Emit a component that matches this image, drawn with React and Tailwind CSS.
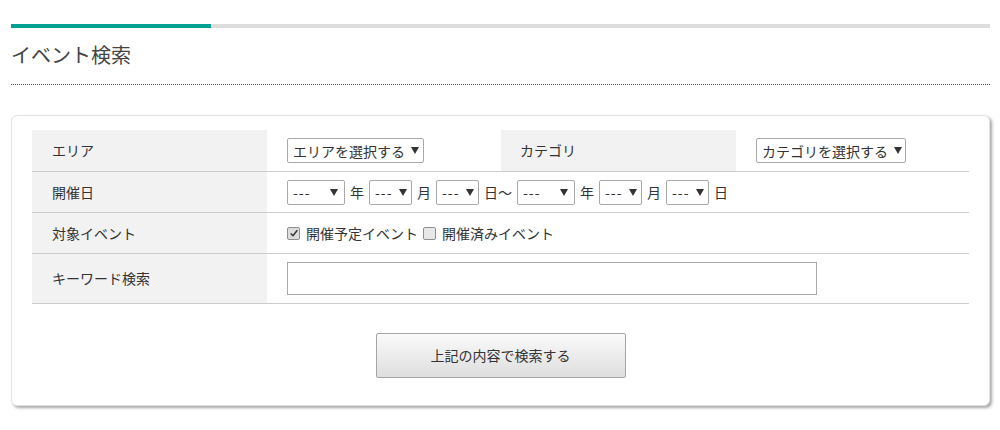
import React from 'react';

const FONT = '[font-family:Meiryo,"Noto_Sans_CJK_JP","Noto_Sans",sans-serif]';

const Caret = () => (
  <svg viewBox="0 0 8 7" className="ml-[6px] h-[7px] w-[8px] shrink-0">
    <path d="M0 0 H8 L4 7 Z" fill="#333" />
  </svg>
);

const FakeSelect = ({ label, width }) => (
  <div
    className={`flex h-[25px] shrink-0 items-center justify-between whitespace-nowrap rounded-[2px] border border-[#a9a9a9] bg-white pl-[5px] pr-[6px] text-[14px] text-[#333] ${width}`}
  >
    <span className={`leading-none ${label === '---' ? 'tracking-[1px]' : ''}`}>{label}</span>
    <Caret />
  </div>
);

const Checkbox = ({ checked, label }) => (
  <label className="flex items-center gap-[6px]">
    <span
      className={`flex h-[13px] w-[13px] items-center justify-center rounded-[2px] border border-[#8f8f8f] ${checked ? 'bg-[#dcdcdc]' : 'bg-[#e8e8e8]'}`}
    >
      {checked && (
        <svg viewBox="0 0 12 12" className="h-[10px] w-[10px]">
          <path d="M2 6.5 L4.8 9.2 L10 2.8" fill="none" stroke="#333" strokeWidth="1.8" />
        </svg>
      )}
    </span>
    <span>{label}</span>
  </label>
);

const Row = ({ label, children, tall = false }) => (
  <div className={`flex border-t border-[#cccccc] ${tall ? 'h-[50px]' : 'h-[41px]'}`}>
    <div className="flex w-[235px] items-center bg-[#f2f2f2] pl-[20px] text-[14px] text-[#333]">{label}</div>
    <div className="flex flex-1 items-center pl-[20px] text-[14px] text-[#333]">{children}</div>
  </div>
);

const DateSep = ({ children }) => <span className="mx-[5px] whitespace-nowrap text-[14px]">{children}</span>;

export default function App() {
  return (
    <div className={`min-h-[430px] w-[1000px] bg-white ${FONT}`}>
      <div className="px-[11px] pt-[24px]">
        <div className="flex h-[4px] w-[979px]">
          <div className="w-[200px] bg-[#00a092]" />
          <div className="flex-1 bg-[#dddddd]" />
        </div>
        <h2 className="mt-[13px] text-[20px] leading-[28px] text-[#444]">イベント検索</h2>
        <div className="mt-[15px] w-[979px] border-t border-dotted border-[#555]" />

        <div className="mt-[30px] w-[979px] rounded-[6px] border border-[#e2e2e2] bg-white px-[20px] pb-[27px] pt-[14px] shadow-[2px_2px_3px_rgba(0,0,0,0.35)]">
          <div className="border-b border-[#cccccc]">
            <div className="flex h-[41px]">
              <div className="flex w-[235px] items-center bg-[#f2f2f2] pl-[20px] text-[14px] text-[#333]">エリア</div>
              <div className="flex w-[234px] items-center pl-[20px]">
                <FakeSelect label="エリアを選択する" width="w-[137px]" />
              </div>
              <div className="flex w-[235px] items-center bg-[#f2f2f2] pl-[19px] text-[14px] text-[#333]">カテゴリ</div>
              <div className="flex flex-1 items-center pl-[20px]">
                <FakeSelect label="カテゴリを選択する" width="w-[150px]" />
              </div>
            </div>
            <Row label="開催日">
              <FakeSelect label="---" width="w-[58px]" />
              <DateSep>年</DateSep>
              <FakeSelect label="---" width="w-[43px]" />
              <DateSep>月</DateSep>
              <FakeSelect label="---" width="w-[43px]" />
              <DateSep>日～</DateSep>
              <FakeSelect label="---" width="w-[58px]" />
              <DateSep>年</DateSep>
              <FakeSelect label="---" width="w-[43px]" />
              <DateSep>月</DateSep>
              <FakeSelect label="---" width="w-[43px]" />
              <DateSep>日</DateSep>
            </Row>
            <Row label="対象イベント">
              <div className="flex items-center gap-[5px] text-[14px]">
                <Checkbox checked label="開催予定イベント" />
                <Checkbox label="開催済みイベント" />
              </div>
            </Row>
            <Row label="キーワード検索" tall>
              <input
                type="text"
                className="h-[33px] w-[530px] border border-[#a9a9a9] bg-white px-2 text-[14px] outline-none"
              />
            </Row>
          </div>

          <div className="mt-[29px] flex justify-center">
            <button
              type="button"
              className="h-[45px] w-[250px] rounded-[2px] border border-[#a5a5a5] bg-gradient-to-b from-[#fafafa] to-[#dedede] text-[14px] text-[#333]"
            >
              上記の内容で検索する
            </button>
          </div>
        </div>
      </div>
    </div>
  );
}
